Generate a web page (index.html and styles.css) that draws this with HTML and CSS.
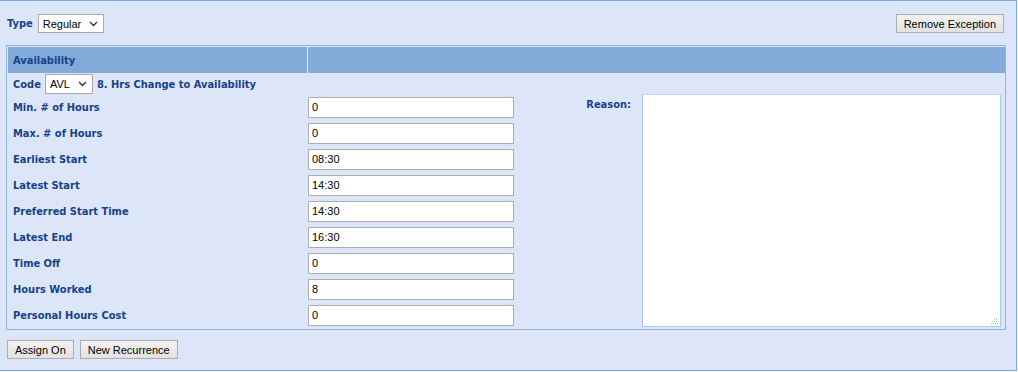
FILE: index.html
```html
<!DOCTYPE html>
<html lang="en">

  <head>
    <meta charset="UTF-8">
    <title>Availability Exception</title>
    <link rel="stylesheet" href="styles.css">
  </head>

  <body>

    <div class="panel">
      <div class="topbar">
        <div class="type-field">
          <label>Type</label>
          <span class="select select-type">
            <span>Regular</span>
            <svg width="9" height="6" viewBox="0 0 9 6"><path d="M1 1l3.5 3.5L8 1" fill="none" stroke="#333" stroke-width="1.4"/></svg>
          </span>
        </div>
        <button class="btn">Remove Exception</button>
      </div>

      <div class="grid-box">
        <div class="grid-head">
          <div class="head-cell first">Availability</div>
          <div class="head-cell"></div>
        </div>

        <div class="code-row">
          <label>Code</label>
          <span class="select select-code">
            <span>AVL</span>
            <svg width="9" height="6" viewBox="0 0 9 6"><path d="M1 1l3.5 3.5L8 1" fill="none" stroke="#333" stroke-width="1.4"/></svg>
          </span>
          <span class="code-desc">8. Hrs Change to Availability</span>
        </div>

        <div class="form-body">
          <div class="fields">
            <div class="field"><label>Min. # of Hours</label><input type="text" value="0"></div>
            <div class="field"><label>Max. # of Hours</label><input type="text" value="0"></div>
            <div class="field"><label>Earliest Start</label><input type="text" value="08:30"></div>
            <div class="field"><label>Latest Start</label><input type="text" value="14:30"></div>
            <div class="field"><label>Preferred Start Time</label><input type="text" value="14:30"></div>
            <div class="field"><label>Latest End</label><input type="text" value="16:30"></div>
            <div class="field"><label>Time Off</label><input type="text" value="0"></div>
            <div class="field"><label>Hours Worked</label><input type="text" value="8"></div>
            <div class="field"><label>Personal Hours Cost</label><input type="text" value="0"></div>
          </div>

          <div class="reason">
            <label>Reason:</label>
            <div class="reason-box">
              <textarea></textarea>
              <!-- resize grip dots -->
              <svg class="grip" width="7" height="7" viewBox="0 0 7 7" fill="#b8b8b8">
                <rect x="5" y="0" width="1" height="1"/>
                <rect x="3" y="2" width="1" height="1"/><rect x="5" y="2" width="1" height="1"/>
                <rect x="1" y="4" width="1" height="1"/><rect x="3" y="4" width="1" height="1"/><rect x="5" y="4" width="1" height="1"/>
                <rect x="0" y="6" width="1" height="1"/><rect x="2" y="6" width="1" height="1"/><rect x="4" y="6" width="1" height="1"/><rect x="6" y="6" width="1" height="1"/>
              </svg>
            </div>
          </div>
        </div>
      </div>

      <div class="actions">
        <button class="btn">Assign On</button>
        <button class="btn">New Recurrence</button>
      </div>
    </div>

  </body>

</html>
```

FILE: styles.css
```css
body {
  font-family: 'Liberation Sans', Arial, sans-serif;
  font-size: 11px;
  background-color: #f4f4f4;
  margin: 0;
  padding: 0;
}

label,
.code-desc,
.head-cell {
  font-family: 'DejaVu Sans Condensed', 'Liberation Sans', sans-serif;
  font-size: 11px;
  font-weight: bold;
  color: #15428b;
}

.panel {
  width: 1016px;
  height: 369px;
  background-color: #dce6f8;
  border: 1px solid #7eaae0;
  border-left: none;
}

.topbar {
  display: flex;
  justify-content: space-between;
  align-items: center;
  padding: 13px 12px 0 7px;
  height: 19px;
}

.type-field {
  display: flex;
  align-items: center;
  gap: 5px;
}

.select {
  display: flex;
  align-items: center;
  justify-content: space-between;
  box-sizing: border-box;
  height: 19px;
  padding: 0 5px 0 4px;
  background: white;
  border: 1px solid #a9a9a9;
  color: #000;
  font-size: 11px;
}

.select-type {
  width: 66px;
}

.select-code {
  width: 48px;
  height: 20px;
}

.btn {
  height: 19px;
  padding: 0 7px;
  font-family: 'Liberation Sans', Arial, sans-serif;
  font-size: 11px;
  color: #000;
  background: linear-gradient(#f2f2f2, #e2e2e2);
  border: 1px solid #adadad;
  border-radius: 0;
}

.grid-box {
  margin: 12px 0 0 6px;
  width: 997px;
  height: 282px;
  border: 1px solid #8fb3e3;
  padding: 1px 0 0 1px;
}

.grid-head {
  display: flex;
  height: 26px;
  background-color: #82abda;
}

.head-cell {
  flex: 1;
  display: flex;
  align-items: center;
  padding-left: 5px;
}

.head-cell.first {
  flex: none;
  width: 294px;
  border-right: 1px solid #e8eef8;
}

.code-row {
  display: flex;
  align-items: center;
  gap: 4px;
  height: 20px;
  padding: 1px 0 0 5px;
}

.form-body {
  display: flex;
}

.fields {
  display: flex;
  flex-direction: column;
}

.field {
  display: flex;
  align-items: center;
  height: 26px;
}

.field label {
  width: 295px;
  padding-left: 5px;
}

.field input {
  box-sizing: border-box;
  width: 206px;
  height: 21px;
  margin: 0;
  padding: 0 3px;
  border: 1px solid #adadad;
  font-family: 'Liberation Sans', Arial, sans-serif;
  font-size: 11px;
  color: #000;
}

.reason {
  display: flex;
  align-items: flex-start;
  flex: 1;
}

.reason label {
  width: 117px;
  text-align: right;
  margin-top: 4px;
}

.reason-box {
  position: relative;
  margin-left: 11px;
  height: 233px;
}

.reason-box textarea {
  display: block;
  box-sizing: border-box;
  margin: 0;
  width: 359px;
  height: 233px;
  border: 1px solid #a7c7ec;
  border-top-color: #c5d9f2;
  background: white;
  resize: none;
}

.grip {
  position: absolute;
  right: 3px;
  bottom: 3px;
}

.actions {
  display: flex;
  gap: 6px;
  padding: 10px 0 0 7px;
}
```
